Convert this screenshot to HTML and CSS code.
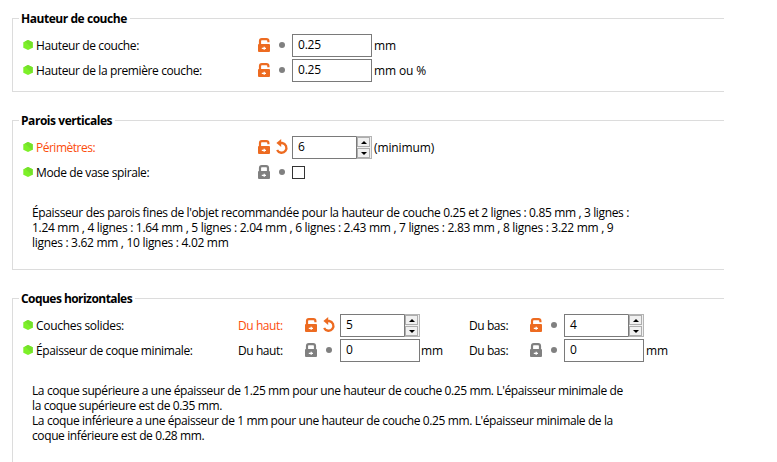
FILE: index.html
```html
<!DOCTYPE html>
<html lang="fr">
<head>
<meta charset="utf-8">
<title>Couches et périmètres</title>
<link rel="stylesheet" href="styles.css">
</head>
<body>
<svg class="defs" width="0" height="0">
  <symbol id="hex" viewBox="0 0 10 10"><path d="M5 0L9.7 2.3V7.7L5 10L.3 7.7V2.3Z" fill="#7df028"/><path d="M2 1.5L5 0L9.7 2.3V7.7L8.8 8.1Z" fill="#74e02b"/></symbol>
  <symbol id="open" viewBox="0 0 12 14"><path d="M2 8V3Q2 1.1 3.8 1.1H8.4Q10.4 1.1 10.4 3V4.2" fill="none" stroke="currentColor" stroke-width="2.2"/><rect y="6" width="12" height="8" rx="1" fill="currentColor"/><path d="M3.8 10.3H8M6.2 8.8V11.8" fill="none" stroke="#fff" stroke-width="1.3"/></symbol>
  <symbol id="closed" viewBox="0 0 12 14"><path d="M2 8V3Q2 1.1 3.8 1.1H8.2Q10 1.1 10 3V8" fill="none" stroke="currentColor" stroke-width="2.2"/><rect y="6" width="12" height="8" rx="1" fill="currentColor"/><path d="M3.8 10.3H8M6.2 8.8V11.8" fill="none" stroke="#fff" stroke-width="1.3"/></symbol>
  <symbol id="undo" viewBox="0 0 14 14"><path d="M5 3H7.2A4.9 4.9 0 1 1 2.1 10" fill="none" stroke="currentColor" stroke-width="2.3"/><path d="M1.4 3L6.2 -1V7Z" fill="currentColor"/></symbol>
  <symbol id="dot" viewBox="0 0 14 14"><circle cx="7" cy="7" r="3" fill="currentColor"/></symbol>
</svg>

<section class="group">
  <h2 class="title"><span>Hauteur de couche</span></h2>
  <div class="row">
    <svg class="hex"><use href="#hex"/></svg><label class="name">Hauteur de couche:</label>
    <svg class="lock on"><use href="#open"/></svg><svg class="state"><use href="#dot"/></svg>
    <div class="field">0.25</div><span class="unit">mm</span>
  </div>
  <div class="row">
    <svg class="hex"><use href="#hex"/></svg><label class="name">Hauteur de la première couche:</label>
    <svg class="lock on"><use href="#open"/></svg><svg class="state"><use href="#dot"/></svg>
    <div class="field">0.25</div><span class="unit">mm ou %</span>
  </div>
</section>

<section class="group walls">
  <h2 class="title"><span>Parois verticales</span></h2>
  <div class="row">
    <svg class="hex"><use href="#hex"/></svg><label class="name changed">Périmètres:</label>
    <svg class="lock on"><use href="#open"/></svg><svg class="state on"><use href="#undo"/></svg>
    <div class="field">6<span class="spin"><i class="up"></i><i class="down"></i></span></div><span class="unit">(minimum)</span>
  </div>
  <div class="row">
    <svg class="hex"><use href="#hex"/></svg><label class="name">Mode de vase spirale:</label>
    <svg class="lock"><use href="#closed"/></svg><svg class="state"><use href="#dot"/></svg>
    <span class="check"></span>
  </div>
  <p class="note">Épaisseur des parois fines de l'objet recommandée pour la hauteur de couche 0.25 et 2 lignes : 0.85 mm , 3 lignes :<br><span class="figures">1.24 mm , 4 lignes : 1.64 mm , 5 lignes : 2.04 mm , 6 lignes : 2.43 mm , 7 lignes : 2.83 mm , 8 lignes : 3.22 mm , 9<br>lignes : 3.62 mm , 10 lignes : 4.02 mm</span></p>
</section>

<section class="group shells">
  <h2 class="title"><span>Coques horizontales</span></h2>
  <div class="row">
    <svg class="hex"><use href="#hex"/></svg><label class="name loose">Couches solides:</label>
    <label class="sub changed">Du haut:</label>
    <svg class="lock on"><use href="#open"/></svg><svg class="state on"><use href="#undo"/></svg>
    <div class="field">5<span class="spin"><i class="up"></i><i class="down"></i></span></div><span class="unit"></span>
    <label class="sub bottom">Du bas:</label>
    <svg class="lock on"><use href="#open"/></svg><svg class="state"><use href="#dot"/></svg>
    <div class="field">4<span class="spin"><i class="up"></i><i class="down"></i></span></div>
  </div>
  <div class="row">
    <svg class="hex"><use href="#hex"/></svg><label class="name">Épaisseur de coque minimale:</label>
    <label class="sub">Du haut:</label>
    <svg class="lock"><use href="#closed"/></svg><svg class="state"><use href="#dot"/></svg>
    <div class="field">0</div><span class="unit">mm</span>
    <label class="sub bottom">Du bas:</label>
    <svg class="lock"><use href="#closed"/></svg><svg class="state"><use href="#dot"/></svg>
    <div class="field">0</div><span class="unit last">mm</span>
  </div>
  <p class="note">La coque supérieure a une épaisseur de 1.25 mm pour une hauteur de couche 0.25 mm. L'épaisseur minimale de<br>la coque supérieure est de 0.35 mm.<br>La coque inférieure a une épaisseur de 1 mm pour une hauteur de couche 0.25 mm. L'épaisseur minimale de la<br>coque inférieure est de 0.28 mm.</p>
</section>
</body>
</html>
```
FILE: styles.css
```css
* { box-sizing: border-box; }
html { overflow: hidden; }
body {
  margin: 0;
  padding: 18px 0 0 12px;
  height: 462px;
  overflow: hidden;
  background: #fff;
  color: #000;
  font: 12px/15px "Open Sans", "Noto Sans", sans-serif;
  letter-spacing: -0.2px;
  white-space: nowrap;
}
.defs { position: absolute; }
.group {
  width: 712px;
  height: 74px;
  margin-bottom: 28px;
  border: 1px solid #dcdcdc;
  border-right: 0;
}
.walls { height: 150px; }
.shells { height: 164px; margin-bottom: 0; border-bottom: 0; }
.title {
  margin: -9px 0 6px 6px;
  height: 17px;
  font-size: 12px;
  line-height: 17px;
  font-weight: 700;
}
.title span { display: inline-block; padding: 0 3px 0 2px; background: #fff; letter-spacing: -0.45px; }
.shells .title span { letter-spacing: -0.55px; }
.row { display: flex; align-items: center; height: 25px; padding: 0 0 1px 10px; }
.row > * { flex: none; }
.hex { width: 10px; height: 10px; margin-right: 3px; }
.name { width: 222px; padding-top: 1px; letter-spacing: -0.38px; }
.name.changed { letter-spacing: -0.5px; }
.shells .name { width: 202px; }
.name.loose { letter-spacing: -0.3px; }
.sub { width: 67px; padding-top: 1px; letter-spacing: -0.42px; }
.bottom { width: 61px; }
.lock { width: 12px; height: 14px; color: #808080; }
.state { width: 14px; height: 14px; margin: 0 3px 0 5px; color: #808080; overflow: visible; }
.shells .sub:not(.bottom) + .lock + .state { margin-right: 4px; }
symbol { overflow: visible; }
.on { color: #ed6b21; }
.changed { color: #fc4d0b; }
.field {
  display: flex;
  align-self: flex-start;
  width: 80px;
  height: 23px;
  margin-top: 1px;
  border: 1px solid #7a7a7a;
  padding-left: 5px;
  line-height: 20px;
}
.unit { padding: 1px 0 0 2px; letter-spacing: -0.12px; }
.shells .unit { width: 49px; padding-left: 1px; }
.shells .unit.last { padding-left: 2px; }
.spin {
  display: flex;
  flex-direction: column;
  width: 16px;
  height: 23px;
  margin: -1px -1px 0 auto;
  border: 1px solid #b4b4b4;
  border-left: 1px solid #7a7a7a;
  background: #f0f0f0;
  gap: 1px;
}
.spin i {
  display: flex;
  align-items: center;
  justify-content: center;
  height: 10px;
  margin-right: 1px;
  border: 1px solid #adadad;
  background: #f0f0f0;
}
.spin i::after { content: ""; border: 3px solid transparent; }
.spin .up::after { border-top: 0; border-bottom-color: #000; }
.spin .down::after { border-bottom: 0; border-top-color: #000; }
.check { align-self: flex-start; width: 13px; height: 13px; margin-top: 6px; border: 1px solid #333; }
.note { margin: 20px 0 0 19px; letter-spacing: -0.36px; }
.shells .note { letter-spacing: -0.39px; }
.figures { letter-spacing: -0.3px; }
```
